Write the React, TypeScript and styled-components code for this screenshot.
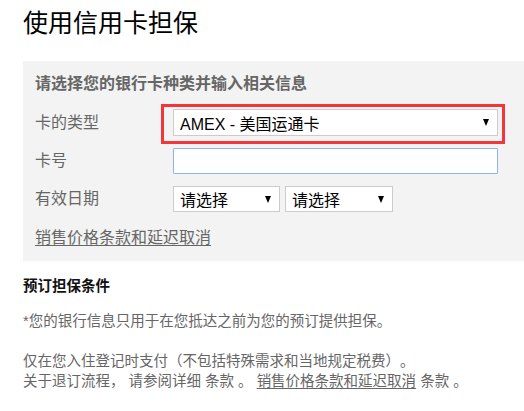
import React from "react";
import styled, { createGlobalStyle } from "styled-components";

const Global = createGlobalStyle`
  html, body { margin: 0; padding: 0; background: #fff; }
  body {
    font-family: "Liberation Sans", "Noto Sans CJK SC", sans-serif;
    color: #000;
    text-spacing-trim: space-all;
  }
`;

const Page = styled.div`
  padding: 0 0 0 23px;
  width: 524px;
  box-sizing: border-box;
  overflow: hidden;
`;

const Title = styled.h1`
  margin: 0;
  padding-top: 8px;
  font-size: 25px;
  line-height: 30px;
  font-weight: normal;
  color: #000;
`;

const Panel = styled.section`
  margin-top: 23px;
  background: #f3f3f3;
  padding: 13px 0 13px 12px;
`;

const PanelHeading = styled.h2`
  margin: 0;
  font-size: 16px;
  line-height: 20px;
  font-weight: bold;
  color: #666;
`;

const Form = styled.div`
  margin-top: 15px;
  display: grid;
  grid-template-columns: 138px 1fr;
  row-gap: 12px;
  align-items: center;
`;

const Label = styled.label`
  font-size: 16px;
  line-height: 20px;
  color: #666;
`;

const Field = styled.div`
  position: relative;
  display: flex;
  gap: 5px;
  width: 325px;
`;

const Highlight = styled.div`
  position: absolute;
  left: -12px;
  right: -7px;
  top: -5px;
  bottom: -8px;
  border: 3px solid #f3363a;
  pointer-events: none;
`;

const Select = styled.div<{ $w?: number }>`
  box-sizing: border-box;
  width: ${(p) => (p.$w ? `${p.$w}px` : "100%")};
  height: ${(p) => (p.$w ? 26 : 27)}px;
  background: #fff;
  border: 1px solid #cccccc;
  display: flex;
  align-items: center;
  justify-content: space-between;
  padding: 0 8px 0 6px;
  font-size: 16px;
  color: #000;
`;

const Arrow = styled.span`
  width: 0;
  height: 0;
  border-left: 3px solid transparent;
  border-right: 3px solid transparent;
  border-top: 7px solid #000;
`;

const Input = styled.input`
  box-sizing: border-box;
  width: 326px;
  height: 26px;
  border: 1px solid #8fb2ee;
  border-radius: 1px;
  background: #fff;
  outline: none;
  margin: 0;
  padding: 0 6px;
  font-size: 16px;
`;

const PanelLink = styled.a`
  display: inline-block;
  margin-top: 16px;
  font-size: 16px;
  line-height: 20px;
  color: #666;
  text-decoration: underline;
  text-underline-offset: 2px;
`;

const Section = styled.section`
  margin-top: 15px;
  font-size: 14.5px;
  line-height: 20px;
  color: #666;
`;

const SectionHeading = styled.h3`
  margin: 0;
  font-size: 14.5px;
  line-height: 20px;
  font-weight: bold;
  color: #111;
`;

const Para = styled.p<{ $gap?: number }>`
  margin: ${(p) => p.$gap ?? 0}px 0 0;
  white-space: pre;
`;

const TextLink = styled.a`
  color: #666;
  text-decoration: underline;
  text-underline-offset: 2px;
`;

export default function App() {
  return (
    <>
      <Global />
      <Page>
        <Title>使用信用卡担保</Title>
        <Panel>
          <PanelHeading>请选择您的银行卡种类并输入相关信息</PanelHeading>
          <Form>
            <Label>卡的类型</Label>
            <Field>
              <Select>
                <span>AMEX - 美国运通卡</span>
                <Arrow />
              </Select>
              <Highlight />
            </Field>
            <Label>卡号</Label>
            <Field>
              <Input type="text" />
            </Field>
            <Label>有效日期</Label>
            <Field>
              <Select $w={107}>
                <span>请选择</span>
                <Arrow />
              </Select>
              <Select $w={108}>
                <span>请选择</span>
                <Arrow />
              </Select>
            </Field>
          </Form>
          <PanelLink>销售价格条款和延迟取消</PanelLink>
        </Panel>
        <Section>
          <SectionHeading>预订担保条件</SectionHeading>
          <Para $gap={15}>*您的银行信息只用于在您抵达之前为您的预订提供担保。</Para>
          <Para $gap={20}>
            仅在您入住登记时支付（不包括特殊需求和当地规定税费）。
            {"\n"}关于退订流程， 请参阅详细 条款 。 <TextLink>销售价格条款和延迟取消</TextLink> 条款 。
          </Para>
        </Section>
      </Page>
    </>
  );
}
